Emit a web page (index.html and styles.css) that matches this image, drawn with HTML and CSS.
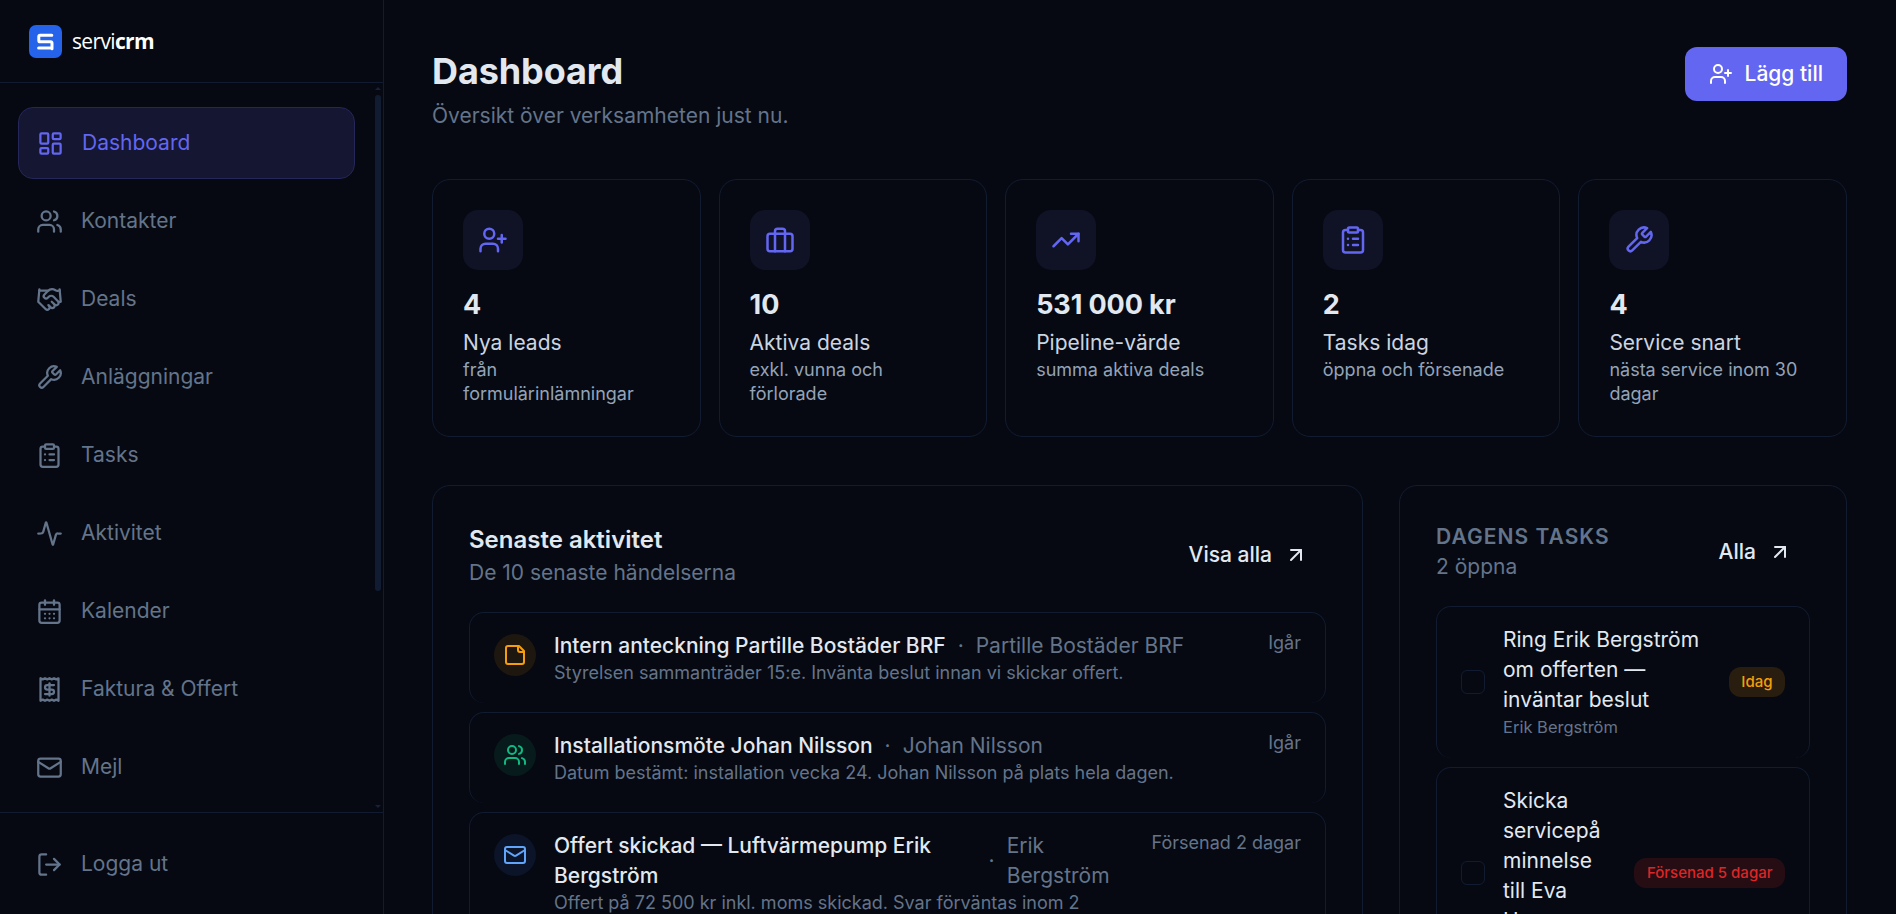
FILE: index.html
```
<!DOCTYPE html>
<html lang="sv">
<head>
    <meta charset="UTF-8">
    <meta name="viewport" content="width=device-width, initial-scale=1.0">
    <title>Dashboard – servicrm</title>
    <link rel="stylesheet" href="styles.css">
</head>
<body>
    <svg class="sprite" xmlns="http://www.w3.org/2000/svg">
        <symbol id="i-dashboard" viewBox="0 0 24 24">
            <rect width="7" height="9" x="3" y="3" rx="1"/><rect width="7" height="5" x="14" y="3" rx="1"/>
            <rect width="7" height="9" x="14" y="12" rx="1"/><rect width="7" height="5" x="3" y="16" rx="1"/>
        </symbol>
        <symbol id="i-users" viewBox="0 0 24 24">
            <path d="M16 21v-2a4 4 0 0 0-4-4H6a4 4 0 0 0-4 4v2"/><circle cx="9" cy="7" r="4"/>
            <path d="M22 21v-2a4 4 0 0 0-3-3.87"/><path d="M16 3.13a4 4 0 0 1 0 7.75"/>
        </symbol>
        <symbol id="i-handshake" viewBox="0 0 24 24">
            <path d="m11 17 2 2a1 1 0 1 0 3-3"/>
            <path d="m14 14 2.5 2.5a1 1 0 1 0 3-3l-3.88-3.88a3 3 0 0 0-4.24 0l-.88.88a1 1 0 1 1-3-3l2.81-2.81a5.79 5.79 0 0 1 7.06-.87l.47.28a2 2 0 0 0 1.42.25L21 4"/>
            <path d="m21 3 1 11h-2"/><path d="M3 3 2 14l6.5 6.5a1 1 0 1 0 3-3"/><path d="M3 4h8"/>
        </symbol>
        <symbol id="i-wrench" viewBox="0 0 24 24">
            <path d="M14.7 6.3a1 1 0 0 0 0 1.4l1.6 1.6a1 1 0 0 0 1.4 0l3.77-3.77a6 6 0 0 1-7.94 7.94l-6.91 6.91a2.12 2.12 0 0 1-3-3l6.91-6.91a6 6 0 0 1 7.94-7.94l-3.76 3.76z"/>
        </symbol>
        <symbol id="i-clipboard" viewBox="0 0 24 24">
            <rect width="8" height="4" x="8" y="2" rx="1"/>
            <path d="M16 4h2a2 2 0 0 1 2 2v14a2 2 0 0 1-2 2H6a2 2 0 0 1-2-2V6a2 2 0 0 1 2-2h2"/>
            <path d="M12 11h4"/><path d="M12 16h4"/><path d="M8 11h.01"/><path d="M8 16h.01"/>
        </symbol>
        <symbol id="i-activity" viewBox="0 0 24 24">
            <path d="M22 12h-2.48a2 2 0 0 0-1.93 1.46l-2.35 8.36a.25.25 0 0 1-.48 0L9.24 2.18a.25.25 0 0 0-.48 0l-2.35 8.36A2 2 0 0 1 4.49 12H2"/>
        </symbol>
        <symbol id="i-calendar" viewBox="0 0 24 24">
            <path d="M8 2v4"/><path d="M16 2v4"/><rect width="18" height="18" x="3" y="4" rx="2"/><path d="M3 10h18"/>
            <path d="M8 14h.01"/><path d="M12 14h.01"/><path d="M16 14h.01"/><path d="M8 18h.01"/><path d="M12 18h.01"/><path d="M16 18h.01"/>
        </symbol>
        <symbol id="i-receipt" viewBox="0 0 24 24">
            <path d="M4 2v20l2-1 2 1 2-1 2 1 2-1 2 1 2-1 2 1V2l-2 1-2-1-2 1-2-1-2 1-2-1-2 1Z"/>
            <path d="M16 8h-6a2 2 0 1 0 0 4h4a2 2 0 1 1 0 4H8"/><path d="M12 17.5v-11"/>
        </symbol>
        <symbol id="i-mail" viewBox="0 0 24 24">
            <rect width="20" height="16" x="2" y="4" rx="2"/><path d="m22 7-8.97 5.7a1.94 1.94 0 0 1-2.06 0L2 7"/>
        </symbol>
        <symbol id="i-logout" viewBox="0 0 24 24">
            <path d="M9 21H5a2 2 0 0 1-2-2V5a2 2 0 0 1 2-2h4"/><path d="m16 17 5-5-5-5"/><path d="M21 12H9"/>
        </symbol>
        <symbol id="i-user-plus" viewBox="0 0 24 24">
            <path d="M16 21v-2a4 4 0 0 0-4-4H6a4 4 0 0 0-4 4v2"/><circle cx="9" cy="7" r="4"/>
            <path d="M19 8v6"/><path d="M22 11h-6"/>
        </symbol>
        <symbol id="i-briefcase" viewBox="0 0 24 24">
            <rect width="20" height="14" x="2" y="7" rx="2"/><path d="M16 21V5a2 2 0 0 0-2-2h-4a2 2 0 0 0-2 2v16"/>
        </symbol>
        <symbol id="i-trend" viewBox="0 0 24 24">
            <path d="m22 7-8.5 8.5-5-5L2 17"/><path d="M16 7h6v6"/>
        </symbol>
        <symbol id="i-arrow" viewBox="0 0 24 24">
            <path d="M7 7h10v10"/><path d="M7 17 17 7"/>
        </symbol>
        <symbol id="i-note" viewBox="0 0 24 24">
            <path d="M16 3H5a2 2 0 0 0-2 2v14a2 2 0 0 0 2 2h14a2 2 0 0 0 2-2V8Z"/><path d="M15 3v4a2 2 0 0 0 2 2h4"/>
        </symbol>
    </svg>

    <div class="app">
        <aside class="sidebar">
            <div class="brand">
                <svg class="brand-mark" viewBox="0 0 33 33">
                    <rect width="33" height="33" rx="7" fill="#2563eb"/>
                    <path d="M22.8 10.2H11.2a1.4 1.4 0 0 0-1.4 1.4v3.8a1.4 1.4 0 0 0 1.4 1.4h10.4a1.4 1.4 0 0 1 1.4 1.4v5.6M9.6 23h12.6" fill="none" stroke="#fff" stroke-width="3" stroke-linecap="round"/>
                </svg>
                <span class="brand-name">servi<b>crm</b></span>
            </div>
            <div class="nav-wrap">
                <nav class="nav">
                    <a class="nav-item active"><svg class="icon"><use href="#i-dashboard"/></svg>Dashboard</a>
                    <a class="nav-item"><svg class="icon"><use href="#i-users"/></svg>Kontakter</a>
                    <a class="nav-item"><svg class="icon"><use href="#i-handshake"/></svg>Deals</a>
                    <a class="nav-item"><svg class="icon"><use href="#i-wrench"/></svg>Anläggningar</a>
                    <a class="nav-item"><svg class="icon"><use href="#i-clipboard"/></svg>Tasks</a>
                    <a class="nav-item"><svg class="icon"><use href="#i-activity"/></svg>Aktivitet</a>
                    <a class="nav-item"><svg class="icon"><use href="#i-calendar"/></svg>Kalender</a>
                    <a class="nav-item"><svg class="icon"><use href="#i-receipt"/></svg>Faktura &amp; Offert</a>
                    <a class="nav-item"><svg class="icon"><use href="#i-mail"/></svg>Mejl</a>
                </nav>
                <div class="scrollbar">
                    <span class="scroll-up"></span>
                    <span class="scroll-thumb"></span>
                    <span class="scroll-down"></span>
                </div>
            </div>
            <div class="sidebar-footer">
                <a class="nav-item"><svg class="icon"><use href="#i-logout"/></svg>Logga ut</a>
            </div>
        </aside>

        <main class="main">
            <header class="page-header">
                <div>
                    <h1>Dashboard</h1>
                    <p class="subtitle">Översikt över verksamheten just nu.</p>
                </div>
                <button class="btn-primary"><svg class="icon"><use href="#i-user-plus"/></svg>Lägg till</button>
            </header>

            <section class="stats">
                <div class="stat">
                    <div class="stat-icon"><svg class="icon"><use href="#i-user-plus"/></svg></div>
                    <div class="stat-value">4</div>
                    <div class="stat-label">Nya leads</div>
                    <div class="stat-hint">från formulärinlämningar</div>
                </div>
                <div class="stat">
                    <div class="stat-icon"><svg class="icon"><use href="#i-briefcase"/></svg></div>
                    <div class="stat-value">10</div>
                    <div class="stat-label">Aktiva deals</div>
                    <div class="stat-hint">exkl. vunna och förlorade</div>
                </div>
                <div class="stat">
                    <div class="stat-icon"><svg class="icon"><use href="#i-trend"/></svg></div>
                    <div class="stat-value">531&nbsp;000 kr</div>
                    <div class="stat-label">Pipeline-värde</div>
                    <div class="stat-hint">summa aktiva deals</div>
                </div>
                <div class="stat">
                    <div class="stat-icon"><svg class="icon"><use href="#i-clipboard"/></svg></div>
                    <div class="stat-value">2</div>
                    <div class="stat-label">Tasks idag</div>
                    <div class="stat-hint">öppna och försenade</div>
                </div>
                <div class="stat">
                    <div class="stat-icon"><svg class="icon"><use href="#i-wrench"/></svg></div>
                    <div class="stat-value">4</div>
                    <div class="stat-label">Service snart</div>
                    <div class="stat-hint">nästa service inom 30 dagar</div>
                </div>
            </section>

            <div class="panels">
                <section class="panel">
                    <div class="panel-header">
                        <div>
                            <h2>Senaste aktivitet</h2>
                            <p class="subtitle">De 10 senaste händelserna</p>
                        </div>
                        <a class="btn-ghost">Visa alla<svg class="icon"><use href="#i-arrow"/></svg></a>
                    </div>
                    <div class="list">
                        <div class="activity">
                            <div class="activity-icon note"><svg class="icon"><use href="#i-note"/></svg></div>
                            <div class="activity-body">
                                <div class="activity-title"><strong>Intern anteckning Partille Bostäder BRF</strong><span>·</span><span>Partille Bostäder BRF</span></div>
                                <p>Styrelsen sammanträder 15:e. Invänta beslut innan vi skickar offert.</p>
                            </div>
                            <span class="activity-date">Igår</span>
                        </div>
                        <div class="activity">
                            <div class="activity-icon meeting"><svg class="icon"><use href="#i-users"/></svg></div>
                            <div class="activity-body">
                                <div class="activity-title"><strong>Installationsmöte Johan Nilsson</strong><span>·</span><span>Johan Nilsson</span></div>
                                <p>Datum bestämt: installation vecka 24. Johan Nilsson på plats hela dagen.</p>
                            </div>
                            <span class="activity-date">Igår</span>
                        </div>
                        <div class="activity">
                            <div class="activity-icon email"><svg class="icon"><use href="#i-mail"/></svg></div>
                            <div class="activity-body">
                                <div class="activity-title"><strong>Offert skickad — Luftvärmepump Erik Bergström</strong><span>·</span><span>Erik Bergström</span></div>
                                <p>Offert på 72 500 kr inkl. moms skickad. Svar förväntas inom 2 veckor.</p>
                            </div>
                            <span class="activity-date">Försenad 2 dagar</span>
                        </div>
                    </div>
                </section>

                <section class="panel">
                    <div class="panel-header">
                        <div>
                            <h3>Dagens tasks</h3>
                            <p class="subtitle">2 öppna</p>
                        </div>
                        <a class="btn-ghost">Alla<svg class="icon"><use href="#i-arrow"/></svg></a>
                    </div>
                    <div class="list">
                        <div class="task">
                            <span class="checkbox"></span>
                            <div class="task-body">
                                <div class="task-title">Ring Erik Bergström om offerten — inväntar beslut</div>
                                <div class="task-contact">Erik Bergström</div>
                            </div>
                            <span class="badge today">Idag</span>
                        </div>
                        <div class="task">
                            <span class="checkbox"></span>
                            <div class="task-body">
                                <div class="task-title">Skicka servicepåminnelse till Eva Hansson</div>
                                <div class="task-contact">Eva Hansson</div>
                            </div>
                            <span class="badge late">Försenad 5 dagar</span>
                        </div>
                    </div>
                </section>
            </div>
        </main>
    </div>
</body>
</html>
```

FILE: styles.css
```
* {
    box-sizing: border-box;
    margin: 0;
    padding: 0;
}
body {
    font-family: Inter, "Liberation Sans", sans-serif;
    font-size: 21px;
    line-height: 30px;
    color: #e2e8f0;
    background-color: #060911;
    overflow: hidden;
}
.sprite {
    display: none;
}
.icon {
    width: 24px;
    height: 24px;
    flex: none;
    fill: none;
    stroke: currentColor;
    stroke-width: 2;
    stroke-linecap: round;
    stroke-linejoin: round;
}
.app {
    display: flex;
    height: 914px;
    overflow: hidden;
}

/* Sidebar */
.sidebar {
    width: 384px;
    flex: none;
    display: flex;
    flex-direction: column;
    border-right: 1px solid #111c33;
}
.brand {
    height: 83px;
    display: flex;
    align-items: center;
    gap: 10px;
    padding: 0 29px;
    border-bottom: 1px solid #111c33;
}
.brand-mark {
    width: 33px;
    height: 33px;
}
.brand-name {
    font-family: "Open Sans", "Noto Sans", sans-serif;
    font-size: 21px;
    letter-spacing: -0.65px;
    color: #fff;
}
.nav-wrap {
    flex: 1;
    min-height: 0;
    display: flex;
}
.nav {
    flex: 1;
    display: flex;
    flex-direction: column;
    gap: 6px;
    padding: 24px 18px 0;
}
.nav-item {
    display: flex;
    align-items: center;
    gap: 18px;
    height: 72px;
    padding: 0 18px;
    border-radius: 15px;
    color: #64748b;
}
.nav-item .icon {
    width: 27px;
    height: 27px;
}
.nav-item.active {
    color: #6366f1;
    background-color: #141632;
    border: 1px solid #25265a;
}
.scrollbar {
    width: 10px;
    display: flex;
    flex-direction: column;
    align-items: center;
    padding: 4px 2px 4px 2px;
}
.scroll-up,
.scroll-down {
    border: 3px solid transparent;
}
.scroll-up {
    border-top: 0;
    border-bottom-color: #16213a;
}
.scroll-down {
    margin-top: auto;
    border-bottom: 0;
    border-top-color: #16213a;
}
.scroll-thumb {
    width: 6px;
    height: 496px;
    margin-top: 5px;
    border-radius: 3px;
    background-color: #111c33;
}
.sidebar-footer {
    height: 102px;
    padding: 18px;
    border-top: 1px solid #111c33;
}
.sidebar-footer .nav-item {
    height: 66px;
}

/* Content */
.main {
    flex: 1;
    padding: 47px 49px 0 48px;
}
.page-header {
    display: flex;
    justify-content: space-between;
    align-items: flex-start;
    margin-bottom: 48px;
}
h1 {
    font-size: 36px;
    line-height: 48px;
    font-weight: 700;
    letter-spacing: -0.1px;
    margin-bottom: 6px;
}
.subtitle {
    color: #64748b;
}
.btn-primary {
    display: flex;
    align-items: center;
    gap: 12px;
    height: 54px;
    padding: 0 24px;
    border: 0;
    border-radius: 12px;
    background-color: #6366f1;
    color: #fff;
    font: inherit;
    font-weight: 500;
}
.stats {
    display: grid;
    grid-template-columns: repeat(5, 1fr);
    gap: 18px;
    margin-bottom: 48px;
}
.stat {
    min-width: 0;
    height: 258px;
    padding: 30px;
    border: 1px solid #111c33;
    border-radius: 18px;
}
.stat-icon {
    display: flex;
    align-items: center;
    justify-content: center;
    width: 60px;
    height: 60px;
    border-radius: 15px;
    background-color: #101226;
    color: #6366f1;
}
.stat-icon .icon {
    width: 30px;
    height: 30px;
}
.stat-value {
    margin: 19px 0 7px;
    font-size: 27px;
    line-height: 32px;
    font-weight: 700;
    letter-spacing: -0.1px;
}
.stat-label {
    color: #cbd5e1;
}
.stat-hint {
    font-size: 18px;
    line-height: 24px;
    color: #94a3b8;
}

/* Panels */
.panels {
    display: grid;
    grid-template-columns: 1fr 448px;
    gap: 36px;
}
.panel {
    min-width: 0;
    padding: 36px;
    border: 1px solid #111c33;
    border-radius: 18px;
}
.panel-header {
    display: flex;
    justify-content: space-between;
    align-items: center;
    margin-bottom: 24px;
}
h2 {
    font-size: 24px;
    line-height: 36px;
    font-weight: 600;
}
h3 {
    font-size: 21px;
    font-weight: 600;
    letter-spacing: 0.05em;
    text-transform: uppercase;
    color: #64748b;
}
.btn-ghost {
    display: flex;
    align-items: center;
    gap: 12px;
    padding: 0 18px;
    font-weight: 500;
}
.list {
    display: flex;
    flex-direction: column;
    gap: 9px;
}
.activity,
.task {
    display: flex;
    gap: 18px;
    padding: 18px 24px;
    border: 1px solid #111c33;
    border-bottom: 0;
    border-radius: 15px;
}
.activity-icon {
    flex: none;
    display: flex;
    align-items: center;
    justify-content: center;
    width: 42px;
    height: 42px;
    margin-top: 3px;
    border-radius: 50%;
}
.activity-icon.note {
    color: #f59e0b;
    background-color: #1e1710;
}
.activity-icon.meeting {
    color: #10b981;
    background-color: #071b1c;
}
.activity-icon.email {
    color: #60a5fa;
    background-color: #0b1428;
}
.activity-body {
    flex: 1;
    min-width: 0;
}
.activity-title {
    display: flex;
    align-items: center;
    gap: 12px;
    color: #64748b;
}
.activity-title strong {
    font-weight: 500;
    color: #e2e8f0;
}
.activity-body p,
.activity-date {
    font-size: 18px;
    line-height: 24px;
    color: #64748b;
}
.activity-date {
    white-space: nowrap;
}
.task {
    align-items: center;
}
.checkbox {
    flex: none;
    width: 24px;
    height: 24px;
    border: 1px solid #111c33;
    border-radius: 6px;
}
.task-body {
    flex: 1;
    min-width: 0;
}
.task-title {
    overflow-wrap: break-word;
}
.task-contact {
    font-size: 16.5px;
    line-height: 24.75px;
    color: #64748b;
}
.badge {
    flex: none;
    padding: 0 12.5px;
    border-radius: 12px;
    font-size: 15px;
    font-weight: 500;
}
.badge.today {
    color: #f59e0b;
    background-color: #291d10;
}
.badge.late {
    color: #dc2626;
    background-color: #260d14;
}
```
